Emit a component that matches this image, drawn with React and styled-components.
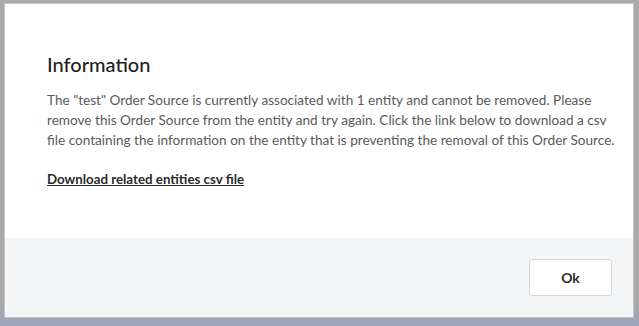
import styled, { createGlobalStyle } from "styled-components";

const GlobalStyle = createGlobalStyle`
  html, body {
    margin: 0;
    padding: 0;
    width: 639px;
    height: 326px;
    overflow: hidden;
  }
  body {
    background: #a9a9aa;
    font-family: "Source Sans Pro", Lato, "Liberation Sans", sans-serif;
  }
`;

const Backdrop = styled.div`
  width: 639px;
  height: 326px;
  box-sizing: border-box;
  padding: 4px 6px 9px 5px;
  background: linear-gradient(to bottom, #aaaaab 0%, #a9a9aa 92%, #9ea6bb 100%);
`;

const Modal = styled.div`
  height: 100%;
  display: flex;
  flex-direction: column;
  background: #ffffff;
  box-shadow: 0 0 0 1px #c4c4c4;
`;

const Body = styled.div`
  flex: 1;
  padding: 48px 20px 0 42px;
`;

const Title = styled.h2`
  margin: 0 0 14px;
  font-size: 20px;
  font-weight: 500;
  color: #1f1f1f;
  line-height: 24px;
`;

const Message = styled.p`
  margin: 0 0 18px;
  font-size: 13.6px;
  line-height: 20px;
  color: #5a5a5a;
  white-space: nowrap;
`;

const DownloadLink = styled.a`
  font-size: 13.3px;
  font-weight: 700;
  color: #2a2a2a;
  text-decoration: underline;
  cursor: pointer;
`;

const Footer = styled.div`
  height: 79px;
  background: #f4f5f7;
  display: flex;
  align-items: center;
  justify-content: flex-end;
  padding: 0 21px;
`;

const OkButton = styled.button`
  width: 83px;
  height: 37px;
  background: #ffffff;
  border: 1px solid #d6d6d6;
  border-radius: 3px;
  font-family: inherit;
  font-size: 14px;
  font-weight: 700;
  color: #2a2a2a;
  cursor: pointer;
`;

export default function App() {
  return (
    <>
      <GlobalStyle />
      <Backdrop>
        <Modal>
          <Body>
            <Title>Information</Title>
            <Message>
              The "test" Order Source is currently associated with 1 entity and cannot be
              removed. Please
              <br />
              remove this Order Source from the entity and try again. Click the link below to
              download a csv
              <br />
              file containing the information on the entity that is preventing the removal of
              this Order Source.
            </Message>
            <DownloadLink>Download related entities csv file</DownloadLink>
          </Body>
          <Footer>
            <OkButton>Ok</OkButton>
          </Footer>
        </Modal>
      </Backdrop>
    </>
  );
}
